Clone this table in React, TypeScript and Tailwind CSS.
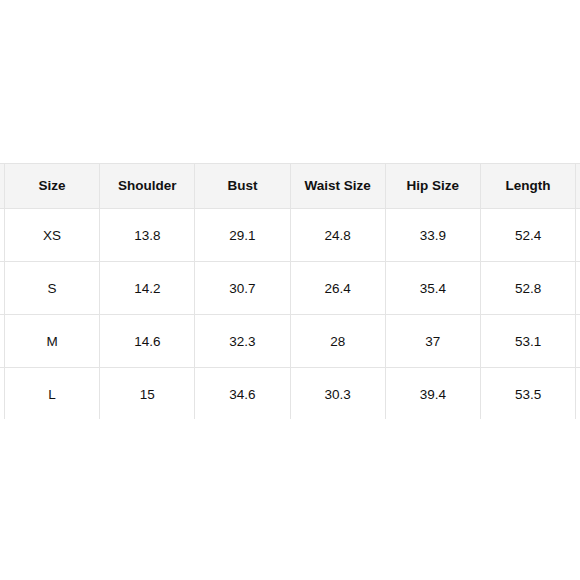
const headers = ["Size", "Shoulder", "Bust", "Waist Size", "Hip Size", "Length"];

const rows = [
  ["XS", "13.8", "29.1", "24.8", "33.9", "52.4"],
  ["S", "14.2", "30.7", "26.4", "35.4", "52.8"],
  ["M", "14.6", "32.3", "28", "37", "53.1"],
  ["L", "15", "34.6", "30.3", "39.4", "53.5"],
];

const grid = "grid grid-cols-[5px_repeat(6,95.2px)_1fr]";

export default function App() {
  return (
    <div
      className="h-[580px] w-[580px] overflow-hidden bg-white pt-[163px] text-[13.5px] text-[#111]"
      style={{ fontFamily: '"Liberation Sans", Arial, sans-serif' }}
    >
      <div className={`${grid} h-[46px] border-y border-[#e4e4e4] bg-[#f4f4f4]`}>
        <div className="border-r border-[#e4e4e4]" />
        {headers.map((h) => (
          <div
            key={h}
            className="flex items-center justify-center border-r border-[#e4e4e4] pt-[1px] font-bold"
          >
            {h}
          </div>
        ))}
        <div />
      </div>

      {rows.map((r, i) => (
        <div
          key={r[0]}
          className={`${grid} ${
            i < rows.length - 1 ? "h-[53px] border-b border-[#e4e4e4]" : "h-[51px]"
          }`}
        >
          <div className="border-r border-[#e4e4e4]" />
          {r.map((v, j) => (
            <div
              key={j}
              className="flex items-center justify-center border-r border-[#e4e4e4] pt-[3px]"
            >
              {v}
            </div>
          ))}
          <div />
        </div>
      ))}
    </div>
  );
}
